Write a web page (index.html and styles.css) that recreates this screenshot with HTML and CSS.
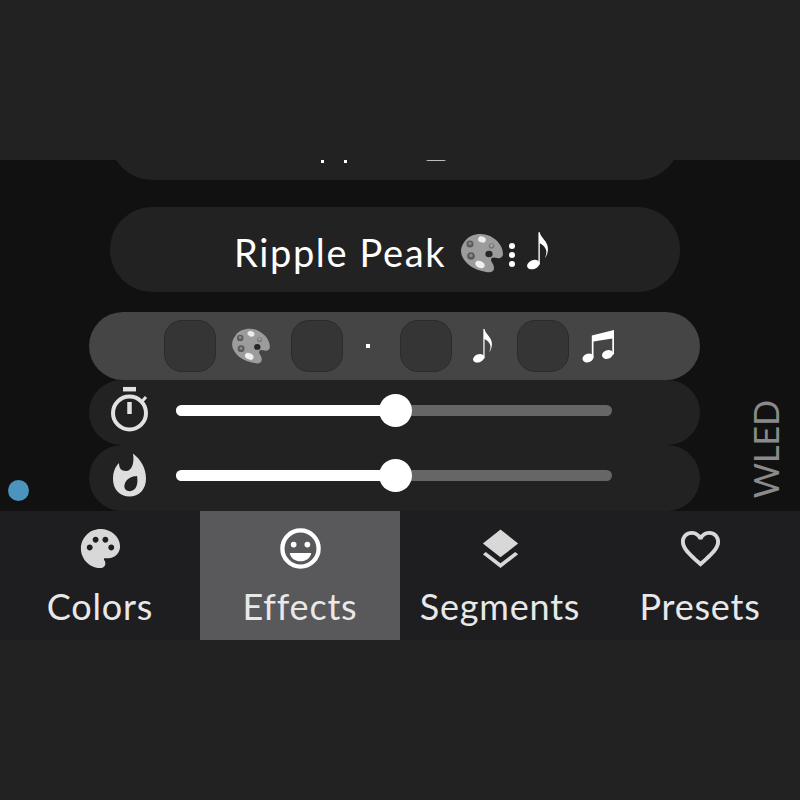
FILE: index.html
```html
<!DOCTYPE html>
<html lang="en">
<head>
<meta charset="utf-8">
<title>WLED Effects</title>
<link rel="stylesheet" href="styles.css">
</head>
<body>
<svg class="defs" width="0" height="0" aria-hidden="true">
  <symbol id="emoji-palette" viewBox="0 0 44 40">
    <path fill="#9c9c9c" d="M5 8C10 1 21-1 30 3c8 4 13 11 13 18 0 3-3 5-6 4-3-1-6-1-6 2 0 2 3 4 3 8 0 4-4 5-8 4C15 37 6 32 2 23 0 18 1 13 5 8z"/>
    <circle cx="10" cy="11" r="3.6" fill="#5c5c5c"/>
    <circle cx="10" cy="10.5" r="1.6" fill="#8a8a8a"/>
    <ellipse cx="22" cy="6.5" rx="4" ry="3" fill="#ececec" transform="rotate(20 22 6.5)"/>
    <circle cx="31.5" cy="13" r="2.8" fill="#7a7a7a"/>
    <circle cx="31.5" cy="12.5" r="1.2" fill="#b5b5b5"/>
    <circle cx="11" cy="23" r="3.8" fill="#5a5a5a"/>
    <circle cx="11" cy="22.5" r="1.7" fill="#8a8a8a"/>
    <ellipse cx="29" cy="21" rx="3.6" ry="3.3" fill="#262626"/>
    <ellipse cx="20" cy="31.5" rx="5" ry="3.4" fill="#f0f0f0" transform="rotate(25 20 31.5)"/>
  </symbol>
  <symbol id="note" viewBox="0 0 22 36">
    <ellipse cx="7" cy="31" rx="6.200" ry="4.200" fill="#fff" transform="rotate(-22 7 31)"/>
    <path fill="#fff" d="M11.900 31V0h1.300c.5 5.500 7.800 8 7.800 16 0 3.500-1.200 6.500-3 9 1.200-3 1.900-5.500 1.200-8-.8-3-4-5.500-6-6.500V31z"/>
  </symbol>
  <symbol id="notes" viewBox="0 0 32 34">
    <ellipse cx="6" cy="29" rx="5.600" ry="4.200" fill="#fff" transform="rotate(-20 6 29)"/>
    <ellipse cx="25.500" cy="25.500" rx="5.600" ry="4.200" fill="#fff" transform="rotate(-20 25.500 25.500)"/>
    <path fill="#fff" d="M9.800 29V6.500L32 1V25.500h-1.700V9.500L11.500 12.500V29z"/>
  </symbol>
</svg>

<div class="letterbox"></div>
<div class="app">
  <main class="stage">
    <div class="pill clipped">
      <span class="crumb"></span><span class="crumb"></span><span class="crumb wide"></span>
    </div>
    <div class="pill title">
      <span class="title-text">Ripple Peak</span>
      <svg class="title-palette"><use href="#emoji-palette"/></svg>
      <span class="title-dots"><i></i><i></i><i></i></span>
      <svg class="title-note"><use href="#note"/></svg>
    </div>
    <div class="chips">
      <span class="chip"></span>
      <svg class="chip-palette"><use href="#emoji-palette"/></svg>
      <span class="chip after-palette"></span>
      <span class="chip-dot"></span>
      <span class="chip after-dot"></span>
      <svg class="chip-note"><use href="#note"/></svg>
      <span class="chip after-note"></span>
      <svg class="chip-notes"><use href="#notes"/></svg>
    </div>
    <div class="slider-row">
      <svg class="slider-icon" viewBox="0 0 44 48">
        <g fill="none" stroke="#e2e2e2">
          <circle cx="21.500" cy="27" r="16.500" stroke-width="4"/>
          <path d="M15 3.200h13" stroke-width="4.500"/>
          <path d="M21.500 16v12" stroke-width="4.500"/>
          <path d="M33.500 16l4.500-5" stroke-width="3"/>
        </g>
      </svg>
      <div class="track"><div class="fill" style="width:50.5%"><span class="thumb"></span></div></div>
    </div>
    <div class="slider-row">
      <svg class="slider-icon" viewBox="0 0 44 48">
        <path fill="#dedede" fill-rule="evenodd" d="M25 1.500c8 6 13 15 13 25 0 11-7 18-16.500 18S5 37.500 5 27c0-7 2-12 6-16 0 5 2 8 7 8 6 0 8.500-8 7-17.500zM29 24c-5 0-11.500 3-12.500 9-1 5 4 7.500 8 5.500 5-2 5.500-9 4.500-14.500z"/>
      </svg>
      <div class="track"><div class="fill" style="width:50.5%"><span class="thumb"></span></div></div>
    </div>
    <span class="status-dot"></span>
    <span class="brand">WLED</span>
  </main>
  <nav class="tabs">
    <a class="tab">
      <svg class="tab-icon" viewBox="0 0 24 24"><path d="M12 2C6.490 2 2 6.490 2 12s4.490 10 10 10c1.380 0 2.500-1.120 2.500-2.500 0-.61-.23-1.200-.64-1.670-.08-.1-.13-.21-.13-.33 0-.28.22-.5.5-.5H16c3.310 0 6-2.690 6-6 0-4.960-4.490-9-10-9zm-5.500 11c-.83 0-1.500-.67-1.500-1.500S5.670 10 6.500 10s1.500.67 1.500 1.500S7.330 13 6.500 13zm3-4C8.670 9 8 8.330 8 7.500S8.670 6 9.500 6s1.500.67 1.500 1.500S10.330 9 9.500 9zm5 0c-.83 0-1.500-.67-1.500-1.500S13.670 6 14.500 6s1.500.67 1.500 1.500S15.330 9 14.500 9zm3 4c-.83 0-1.500-.67-1.500-1.500s.67-1.500 1.500-1.500 1.500.67 1.500 1.500-.67 1.500-1.500 1.500z"/></svg>
      <span class="tab-label">Colors</span>
    </a>
    <a class="tab active">
      <svg class="tab-icon" viewBox="0 0 48 48">
        <circle cx="24" cy="24" r="18.500" fill="none" stroke="#fff" stroke-width="4.400"/>
        <circle cx="17" cy="20" r="2.900" fill="#fff"/>
        <circle cx="31" cy="20" r="2.900" fill="#fff"/>
        <path fill="#fff" d="M13 28.500h22c-1 5.500-5.500 8.500-11 8.500s-10-3-11-8.500z"/>
      </svg>
      <span class="tab-label">Effects</span>
    </a>
    <a class="tab">
      <svg class="tab-icon" viewBox="0 0 48 48">
        <path d="M24 4.500 42 19 24 33 6 19z"/>
        <path d="M9 27.500 24 39 39 27.500l3 2.300L24 44 6 29.800z"/>
      </svg>
      <span class="tab-label">Segments</span>
    </a>
    <a class="tab">
      <svg class="tab-icon" viewBox="0 0 24 24"><path d="M16.500 3c-1.740 0-3.410.81-4.500 2.090C10.910 3.810 9.240 3 7.500 3 4.420 3 2 5.420 2 8.500c0 3.780 3.400 6.860 8.550 11.540L12 21.350l1.450-1.320C18.600 15.360 22 12.280 22 8.500 22 5.420 19.580 3 16.500 3zm-4.400 15.550l-.1.1-.1-.1C7.140 14.240 4 11.390 4 8.500 4 6.500 5.500 5 7.500 5c1.540 0 3.040.99 3.570 2.360h1.870C13.460 5.990 14.960 5 16.500 5c2 0 3.500 1.500 3.500 3.500 0 2.890-3.140 5.740-7.900 10.050z"/></svg>
      <span class="tab-label">Presets</span>
    </a>
  </nav>
</div>
<div class="letterbox"></div>
</body>
</html>
```

FILE: styles.css
```css
* { box-sizing: border-box; }
html, body { margin: 0; height: 100%; }
body {
  width: 800px;
  height: 800px;
  overflow: hidden;
  background: #222222;
  font-family: "Lato", "Noto Sans", sans-serif;
  font-weight: 400;
  display: flex;
  flex-direction: column;
}
.defs { position: absolute; }
.letterbox { height: 160px; background: #222222; flex: none; }
.app { height: 480px; flex: none; display: flex; flex-direction: column; }

.stage {
  position: relative;
  height: 351px;
  flex: none;
  overflow: hidden;
  background: #111111;
  padding-left: 89px;
  display: flex;
  flex-direction: column;
  justify-content: flex-end;
}
.pill {
  width: 570px;
  margin-left: 21px;
  background: #222222;
  border-radius: 42px;
  flex: none;
}
.clipped {
  height: 84px;
  margin-bottom: 27px;
  position: relative;
}
.crumb {
  position: absolute;
  top: 64px;
  left: 211px;
  width: 3px;
  height: 3px;
  background: #ffffff;
}
.crumb + .crumb { left: 234px; }
.crumb.wide {
  left: 316px;
  top: 63px;
  width: 20px;
  height: 2px;
  border-radius: 0 0 10px 10px;
  background: #bdbdbd;
}
.title {
  height: 85px;
  margin-bottom: 20px;
  display: flex;
  align-items: center;
  padding-left: 124px;
}
.title-text {
  font-size: 38px;
  color: #ffffff;
  line-height: 1;
  letter-spacing: 1.650px;
  margin-top: 5px;
}
.title-palette { width: 44px; height: 40px; margin-left: 14px; margin-top: 7px; flex: none; }
.title-dots {
  display: flex;
  flex-direction: column;
  gap: 3px;
  margin-left: 5px;
  margin-top: 11px;
}
.title-dots i {
  display: block;
  width: 6px;
  height: 6px;
  border-radius: 50%;
  background: #ffffff;
}
.title-note { width: 23px; height: 38px; margin-left: 11px; margin-top: 3px; flex: none; }

.chips {
  width: 611px;
  height: 68px;
  flex: none;
  background: #454545;
  border-radius: 34px;
  display: flex;
  align-items: center;
  padding-left: 75px;
  position: relative;
  z-index: 1;
}
.chip {
  width: 52px;
  height: 52px;
  flex: none;
  border-radius: 18px;
  background: #353535;
  border: 1.500px solid #2b2b2b;
}
.chip-palette { width: 40px; height: 36px; margin-left: 15px; flex: none; }
.after-palette { margin-left: 20px; }
.chip-dot { width: 4px; height: 4px; background: #fff; margin-left: 23px; flex: none; }
.after-dot { margin-left: 30px; }
.chip-note { width: 21px; height: 34px; margin-left: 20px; flex: none; }
.after-note { margin-left: 24px; }
.chip-notes { width: 32px; height: 34px; margin-left: 13px; flex: none; }

.slider-row {
  width: 611px;
  height: 65px;
  flex: none;
  background: #222222;
  border-radius: 33px;
  display: flex;
  align-items: center;
  padding-left: 19px;
  padding-bottom: 5px;
}
.slider-row + .slider-row { height: 66px; }
.slider-icon { width: 44px; height: 48px; flex: none; margin-right: 24px; }
.track {
  width: 436px;
  height: 11px;
  border-radius: 6px;
  background: #666666;
  flex: none;
}
.fill {
  position: relative;
  height: 100%;
  background: #ffffff;
  border-radius: 6px;
}
.thumb {
  position: absolute;
  right: -16px;
  top: -11px;
  width: 33px;
  height: 33px;
  border-radius: 50%;
  background: #ffffff;
}
.status-dot {
  position: absolute;
  left: 8px;
  top: 320px;
  width: 21px;
  height: 21px;
  border-radius: 50%;
  background: #4a94bd;
}
.brand {
  position: absolute;
  left: 750px;
  top: 240px;
  writing-mode: vertical-rl;
  transform: rotate(180deg);
  color: #8a8a8a;
  font-size: 34px;
  line-height: 32px;
}

.tabs {
  height: 129px;
  flex: none;
  display: grid;
  grid-template-columns: repeat(4, 200px);
  background: #1e1d20;
}
.tab {
  display: flex;
  flex-direction: column;
  align-items: center;
  padding-top: 14px;
  color: #e8e8e8;
}
.tab.active { background: #59585b; }
.tab-icon { width: 47px; height: 47px; fill: #d8d8d8; flex: none; }
.tab-label { font-size: 36px; line-height: 40px; margin-top: 14px; letter-spacing: 0.800px; }
```
